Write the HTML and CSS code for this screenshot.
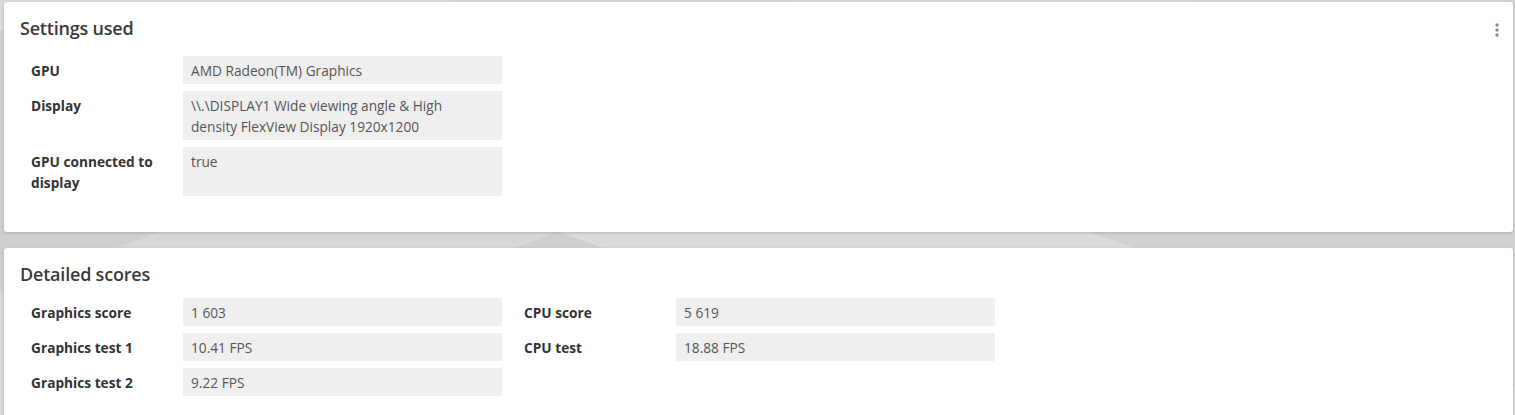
FILE: index.html
```html
<!DOCTYPE html>
<html>
<head>
<meta charset="utf-8">
<link rel="stylesheet" href="styles.css">
</head>
<body>
<div class="page">
  <section class="card card-settings">
    <header class="card-head">
      <h2 class="card-title">Settings used</h2>
      <button class="kebab" aria-label="More">
        <svg width="6" height="16" viewBox="0 0 6 16"><circle cx="3" cy="3" r="1.7"/><circle cx="3" cy="8" r="1.7"/><circle cx="3" cy="13" r="1.7"/></svg>
      </button>
    </header>
    <div class="list">
      <div class="row"><div class="label">GPU</div><div class="value">AMD Radeon(TM) Graphics</div></div>
      <div class="row"><div class="label">Display</div><div class="value">\\.\DISPLAY1 Wide viewing angle &amp; High density FlexView Display 1920x1200</div></div>
      <div class="row"><div class="label">GPU connected to display</div><div class="value">true</div></div>
    </div>
  </section>
  <section class="card card-scores">
    <header class="card-head">
      <h2 class="card-title">Detailed scores</h2>
    </header>
    <div class="cols">
      <div class="list">
        <div class="row"><div class="label">Graphics score</div><div class="value">1 603</div></div>
        <div class="row"><div class="label">Graphics test 1</div><div class="value">10.41 FPS</div></div>
        <div class="row"><div class="label">Graphics test 2</div><div class="value">9.22 FPS</div></div>
      </div>
      <div class="list">
        <div class="row"><div class="label">CPU score</div><div class="value">5 619</div></div>
        <div class="row"><div class="label">CPU test</div><div class="value">18.88 FPS</div></div>
      </div>
    </div>
  </section>
</div>
</body>
</html>
```
FILE: styles.css
```css
html, body {
  margin: 0;
  padding: 0;
}
body {
  font-family: "Open Sans", "Noto Sans", sans-serif;
  color: #333;
  background-color: #d6d6d6;
  background-image:
    linear-gradient(160deg, rgba(255,255,255,0) 0 30%, rgba(255,255,255,0.18) 30% 45%, rgba(0,0,0,0) 45%),
    linear-gradient(20deg, rgba(0,0,0,0.03) 0 40%, rgba(255,255,255,0.12) 40% 60%, rgba(0,0,0,0.02) 60%);
  height: 415px;
  overflow: hidden;
}
.page {
  padding: 2px 2px 0 4px;
  display: flex;
  flex-direction: column;
  gap: 16px;
}
.card {
  background: #fff;
  border-radius: 3px;
  box-shadow: 0 1px 3px rgba(0,0,0,0.18);
  padding: 0 16px;
}
.card-settings {
  height: 230px;
  box-sizing: border-box;
}
.card-scores {
  min-height: 170px;
}
.card-head {
  display: flex;
  align-items: flex-start;
  justify-content: space-between;
  padding-top: 14px;
}
.card-settings .card-head {
  height: 40px;
}
.card-scores .card-head {
  height: 36px;
}
.card-title {
  margin: 0;
  font-size: 18px;
  font-weight: 600;
  line-height: 24px;
  color: #3a3a3a;
  letter-spacing: -0.2px;
}
.kebab {
  border: 0;
  background: none;
  padding: 0;
  margin: 4px -10px 0 0;
  width: 20px;
  height: 20px;
  display: flex;
  align-items: center;
  justify-content: center;
  fill: #8a8a8a;
  cursor: pointer;
}
.cols {
  display: flex;
  gap: 22px;
}
.list {
  display: flex;
  flex-direction: column;
  gap: 7px;
  padding-left: 11px;
  width: 471px;
}
.cols .list + .list {
  padding-left: 0;
}
.row {
  display: flex;
}
.label {
  width: 152px;
  flex: none;
  font-size: 13.7px;
  font-weight: 700;
  line-height: 21px;
  padding: 3.5px 8px 3.5px 0;
  box-sizing: border-box;
  color: #333;
}
.value {
  width: 319px;
  flex: none;
  box-sizing: border-box;
  background: #efefef;
  font-size: 13.7px;
  line-height: 21px;
  padding: 3.5px 16px 3.5px 8px;
  color: #555;
}
```
